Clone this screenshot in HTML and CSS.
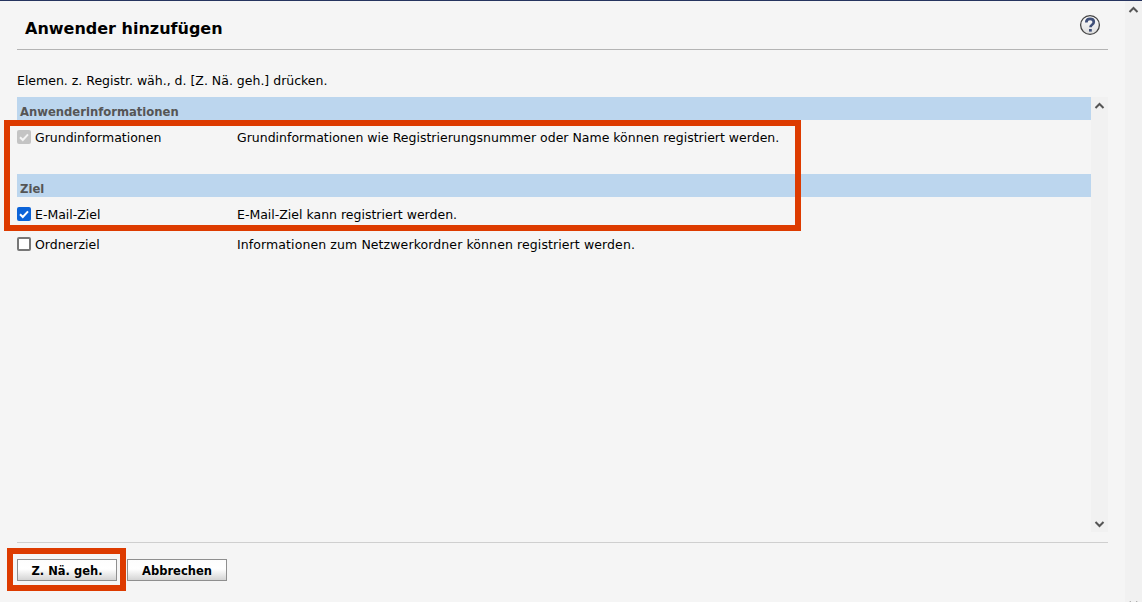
FILE: index.html
```html
<!DOCTYPE html>
<html lang="de">
<head>
<meta charset="utf-8">
<title>Anwender hinzufügen</title>
<link rel="stylesheet" href="styles.css">
</head>
<body>
<div class="page">
  <main class="main">
    <header class="head">
      <h1 class="title">Anwender hinzufügen</h1>
      <svg class="help" width="22" height="22" viewBox="0 0 22 22" aria-label="Hilfe">
        <defs><linearGradient id="hg" x1="0" y1="0" x2="0" y2="1"><stop offset="0" stop-color="#ffffff"/><stop offset="1" stop-color="#dcdcdc"/></linearGradient></defs>
        <circle cx="11" cy="11" r="9.4" fill="url(#hg)" stroke="#444" stroke-width="1.3"/>
        <path d="M7.3 8.4c0-2.2 1.6-3.5 3.8-3.5s3.7 1.2 3.7 3.1c0 1.6-1 2.3-2 3-.9.6-1.3 1.1-1.3 2.2" fill="none" stroke="#3f4f78" stroke-width="2.7"/>
        <rect x="10" y="15" width="2.8" height="2.6" fill="#3f4f78"/>
      </svg>
    </header>
    <p class="hint">Elemen. z. Registr. wäh., d. [Z. Nä. geh.] drücken.</p>
    <div class="listwrap">
      <div class="list">
        <div class="group">Anwenderinformationen</div>
        <div class="row row-first">
          <label class="name"><span class="box box-disabled"><svg width="14" height="14" viewBox="0 0 14 14"><path d="M3 7.2l2.8 2.8L11 4.4" fill="none" stroke="#f4f4f4" stroke-width="2"/></svg></span><span class="label">Grundinformationen</span></label>
          <span class="desc">Grundinformationen wie Registrierungsnummer oder Name können registriert werden.</span>
        </div>
        <div class="group">Ziel</div>
        <div class="row row-mail">
          <label class="name"><span class="box box-on"><svg width="14" height="14" viewBox="0 0 14 14"><path d="M3 7.2l2.8 2.8L11 4.4" fill="none" stroke="#fff" stroke-width="2"/></svg></span><span class="label">E-Mail-Ziel</span></label>
          <span class="desc">E-Mail-Ziel kann registriert werden.</span>
        </div>
        <div class="row row-dir">
          <label class="name"><span class="box box-off"></span><span class="label">Ordnerziel</span></label>
          <span class="desc desc-wide">Informationen zum Netzwerkordner können registriert werden.</span>
        </div>
      </div>
      <div class="bar">
        <svg width="17" height="14" viewBox="0 0 17 14"><path d="M4.5 9l4-4 4 4" fill="none" stroke="#555" stroke-width="2"/></svg>
        <svg width="17" height="14" viewBox="0 0 17 14"><path d="M4.5 5l4 4 4-4" fill="none" stroke="#555" stroke-width="2"/></svg>
      </div>
    </div>
    <footer class="foot">
      <button class="btn" type="button">Z. Nä. geh.</button>
      <button class="btn" type="button">Abbrechen</button>
    </footer>
  </main>
  <div class="pagebar">
    <svg width="17" height="14" viewBox="0 0 17 14"><path d="M4.5 9l4-4 4 4" fill="none" stroke="#555" stroke-width="2"/></svg>
    <svg class="clipped" width="17" height="14" viewBox="0 0 17 14"><path d="M4.5 5l4 4 4-4" fill="none" stroke="#555" stroke-width="2"/></svg>
  </div>
  <div class="mark mark-list"></div>
  <div class="mark mark-btn"></div>
</div>
</body>
</html>
```
FILE: styles.css
```css
* { box-sizing: border-box; }
html, body { margin: 0; height: 100%; }
body {
  background: #f5f5f5;
  color: #000;
  font-family: "DejaVu Sans", Verdana, sans-serif;
  font-size: 12.5px;
  overflow: hidden;
}
.page {
  position: relative;
  display: flex;
  height: 602px;
  overflow: hidden;
  border-top: 1px solid #26345f;
}
.main {
  flex: 1;
  min-width: 0;
  display: flex;
  flex-direction: column;
  padding: 0 17px;
}
.head {
  height: 49px;
  display: flex;
  align-items: center;
  justify-content: space-between;
  border-bottom: 1px solid #b4b4b4;
  padding: 8px 7px 0 8px;
}
.title {
  margin: 0;
  font-size: 16px;
  font-weight: 700;
  line-height: 22px;
}
.help { display: block; margin-top: -9px; }
.hint {
  margin: 23px 0 0;
  line-height: 16px;
  height: 24px;
}
.listwrap {
  display: flex;
  height: 435px;
}
.list { flex: 1; min-width: 0; }
.bar {
  width: 17px;
  background: #f1f1f1;
  display: flex;
  flex-direction: column;
  justify-content: space-between;
  padding: 2px 0 1px;
}
.bar svg, .pagebar svg { display: block; }
.group {
  height: 23px;
  background: #bcd6ee;
  color: #555;
  font-size: 11.6px;
  font-weight: 700;
  line-height: 16px;
  padding: 7px 0 0 3px;
}
.row {
  display: flex;
  align-items: flex-start;
}
.row-first { height: 54px; padding-top: 9px; }
.row-mail { height: 30px; padding-top: 9px; }
.row-dir { height: 30px; padding-top: 9px; }
.name {
  width: 220px;
  display: flex;
  align-items: center;
  line-height: 16px;
  flex-shrink: 0;
  padding-top: 1px;
}
.label, .desc { line-height: 16px; }
.desc { padding-top: 1px; }
.desc-wide { letter-spacing: 0.1px; }
.box {
  width: 14px;
  height: 14px;
  border-radius: 2px;
  margin: 0 4px 2px 0;
  flex-shrink: 0;
  display: block;
}
.box svg { display: block; }
.box-disabled { background: #c4c4c4; }
.box-on { background: #0b63d8; }
.box-off { background: #fff; border: 2px solid #777; }
.foot {
  margin-top: 10px;
  border-top: 1px solid #cfcfcf;
  padding-top: 16px;
  display: flex;
  gap: 10px;
}
.btn {
  width: 100px;
  height: 22px;
  padding: 1px 0 0;
  border: 1px solid #8f8f8f;
  border-radius: 0;
  background: linear-gradient(#fdfdfd 0%, #ffffff 45%, #d4d4d4 100%);
  color: #000;
  font-family: inherit;
  font-size: 11.5px;
  font-weight: 700;
  line-height: 20px;
}
.pagebar {
  width: 17px;
  background: #f1f1f1;
  display: flex;
  flex-direction: column;
  justify-content: space-between;
  padding: 2px 0 0;
}
.clipped { margin-bottom: -9px; }
.mark {
  position: absolute;
  border: 6px solid #dd3b00;
  pointer-events: none;
}
.mark-list { left: 4px; top: 119px; width: 797px; height: 111px; }
.mark-btn { left: 7px; top: 547px; width: 119px; height: 43px; }
```
